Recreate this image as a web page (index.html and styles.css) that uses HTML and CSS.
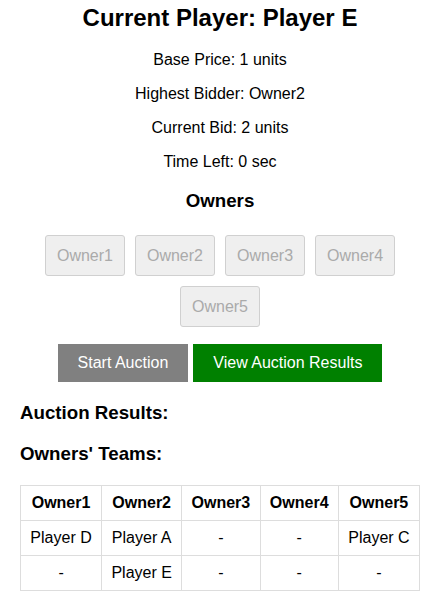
FILE: index.html
```html
<!DOCTYPE html>
<html>
<head>
<meta charset="utf-8">
<link rel="stylesheet" href="styles.css">
</head>
<body>
<div class="app">
  <h2 class="title">Current Player: Player E</h2>
  <p class="info">Base Price: 1 units</p>
  <p class="info">Highest Bidder: Owner2</p>
  <p class="info">Current Bid: 2 units</p>
  <p class="info">Time Left: 0 sec</p>
  <h3 class="center-heading">Owners</h3>
  <div class="owners">
    <button class="owner-btn" disabled>Owner1</button>
    <button class="owner-btn" disabled>Owner2</button>
    <button class="owner-btn" disabled>Owner3</button>
    <button class="owner-btn" disabled>Owner4</button>
    <button class="owner-btn" disabled>Owner5</button>
  </div>
  <div class="actions">
    <button class="action-btn start">Start Auction</button>
    <button class="action-btn results">View Auction Results</button>
  </div>
  <h3 class="left-heading">Auction Results:</h3>
  <h3 class="left-heading">Owners' Teams:</h3>
  <table class="teams">
    <thead>
      <tr><th>Owner1</th><th>Owner2</th><th>Owner3</th><th>Owner4</th><th>Owner5</th></tr>
    </thead>
    <tbody>
      <tr><td>Player D</td><td>Player A</td><td>-</td><td>-</td><td>Player C</td></tr>
      <tr><td>-</td><td>Player E</td><td>-</td><td>-</td><td>-</td></tr>
    </tbody>
  </table>
</div>
</body>
</html>
```

FILE: styles.css
```css
html, body {
  margin: 0;
  padding: 0;
  background: #fff;
}
body {
  font-family: "Liberation Sans", Arial, sans-serif;
  color: #000;
}
.app {
  width: 400px;
  padding: 4px 5px 20px 20px;
  text-align: center;
}
.title {
  font-size: 24px;
  font-weight: bold;
  margin: 0 0 19px;
}
.info {
  font-size: 16px;
  margin: 16px 0;
}
.center-heading {
  font-size: 18.72px;
  margin: 18.72px 0;
}
.owners {
  display: flex;
  flex-wrap: wrap;
  justify-content: center;
  padding: 0 19px;
}
.owner-btn {
  font-family: "Liberation Sans", Arial, sans-serif;
  font-size: 16px;
  margin: 5px;
  padding: 10.5px 11px;
  background: #efefef;
  color: #aaa;
  border: 1px solid #d0d0d0;
  border-radius: 3px;
  line-height: normal;
}
.actions {
  display: flex;
  justify-content: center;
  gap: 5px;
  margin-top: 12px;
}
.action-btn {
  font-family: "Liberation Sans", Arial, sans-serif;
  font-size: 16px;
  padding: 10px 20px;
  border: none;
  color: #fff;
  line-height: normal;
}
.action-btn.start {
  background: #808080;
}
.action-btn.results {
  background: #008000;
}
.left-heading {
  text-align: left;
  font-size: 18.72px;
  margin: 19.5px 0;
}
.teams {
  width: 400px;
  border-collapse: collapse;
  font-size: 16px;
}
.teams th, .teams td {
  border: 1px solid #ddd;
  padding: 8px;
  text-align: center;
}
.teams th {
  font-weight: bold;
}
```
